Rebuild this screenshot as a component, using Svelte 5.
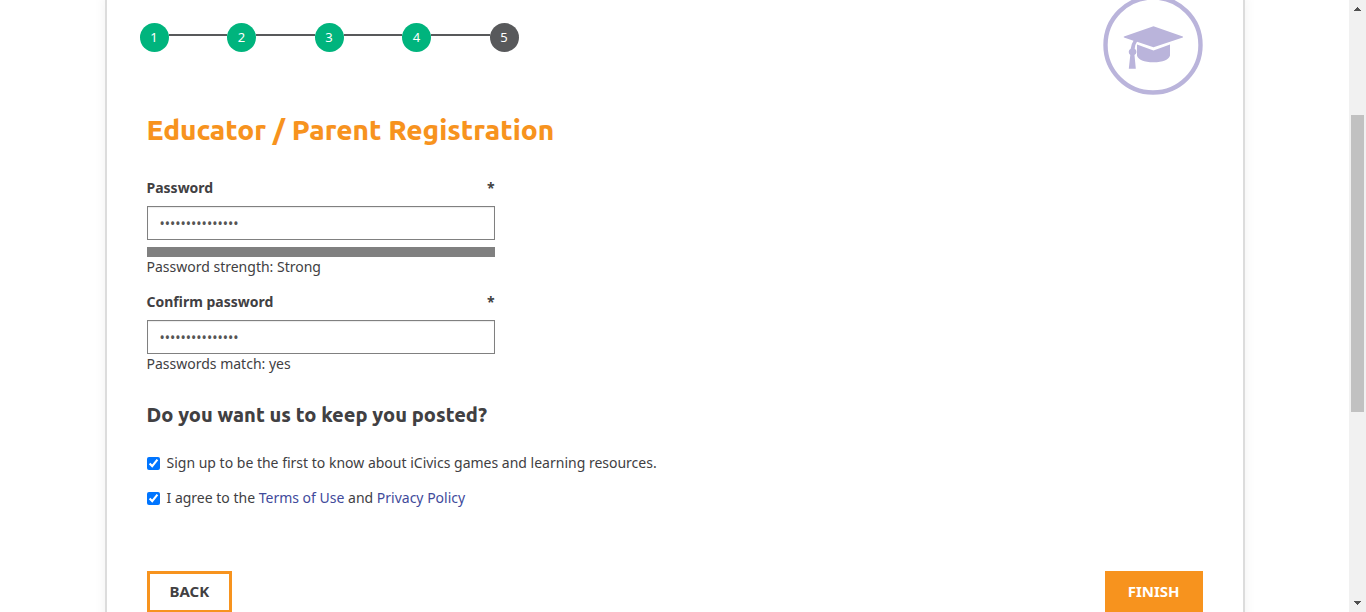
<script>
  const steps = [1, 2, 3, 4, 5];
  const current = 5;
  let password = $state('civics-teacher1');
  let confirmation = $state('civics-teacher1');
  let newsletter = $state(true);
  let agreed = $state(true);
  const match = $derived(password === confirmation ? 'yes' : 'no');
</script>

<div class="window">
  <div class="viewport">
    <main class="panel">
      <header class="top">
        <ol class="steps">
          {#each steps as step}
            <li class:link={step > 1}>
              <span class="dot" class:current={step === current}>{step}</span>
            </li>
          {/each}
        </ol>
        <svg class="badge" viewBox="0 0 100 100" aria-hidden="true">
          <circle cx="50" cy="50" r="47.5" fill="none" stroke="#bab4db" stroke-width="4.4" />
          <g fill="#bab4db">
            <path d="M21 41.400 50.500 31.200 79.800 41.400Q80.500 42 79.800 42.600L50.500 52.300 34 46.800Q32 49.500 31.700 53.700A3.600 3.600 0 0 1 31.500 60L32.800 73.800H25.800L27.300 60A3.600 3.600 0 0 1 27.700 53.800Q28.100 49 30.500 45.700L21 42.600Q20.300 42 21 41.400Z" />
            <path d="M34 49.600 50.500 55.400 67 49.600V60.500C66 64.500 60 67.300 50.500 67.300S35 64.500 34 60.500Z" />
          </g>
        </svg>
      </header>

      <h1>Educator / Parent Registration</h1>

      <form onsubmit={(e) => e.preventDefault()}>
        <div class="field">
          <label for="password"><span>Password</span><span>*</span></label>
          <input id="password" type="password" required bind:value={password} />
          <div class="strength"></div>
          <p>Password strength: Strong</p>
        </div>
        <div class="field">
          <label for="confirm"><span>Confirm password</span><span>*</span></label>
          <input id="confirm" type="password" required bind:value={confirmation} />
          <p>Passwords match: {match}</p>
        </div>

        <h2>Do you want us to keep you posted?</h2>

        <div class="check">
          <input id="news" type="checkbox" bind:checked={newsletter} />
          <label for="news">Sign up to be the first to know about iCivics games and learning resources.</label>
        </div>
        <div class="check">
          <input id="terms" type="checkbox" bind:checked={agreed} />
          <label for="terms">I agree to the <a href="#terms">Terms of Use</a> and <a href="#privacy">Privacy Policy</a></label>
        </div>

        <div class="actions">
          <button type="button" class="back">BACK</button>
          <button type="submit" class="finish">FINISH</button>
        </div>
      </form>
    </main>
  </div>
  <div class="scrollbar" aria-hidden="true">
    <svg viewBox="0 0 17 17"><path d="M8 7h1v1h1v1h1v1h1v1H5v-1h1V9h1V8h1z" fill="#505050" /></svg>
    <div class="track"><div class="thumb"></div></div>
    <svg viewBox="0 0 17 17"><path d="M5 6h7v1h-1v1h-1v1H9v1H8V9H7V8H6V7H5z" fill="#505050" /></svg>
  </div>
</div>

<style>
  :global(body) {
    margin: 0;
    background: #fff;
  }
  .window {
    display: grid;
    grid-template-columns: 1fr 17px;
    height: 100vh;
    font: 14px/20px "Noto Sans", sans-serif;
    color: #414042;
  }
  .viewport {
    overflow: hidden;
  }
  .panel {
    box-sizing: border-box;
    max-width: 1140px;
    min-height: 100%;
    margin: -5px auto 0;
    padding: 0 40px 40px;
    border: solid #dcdcdc;
    border-width: 0 2px;
    background: #fff;
    box-shadow: 0 0 12px rgba(0, 0, 0, 0.06);
  }
  .top {
    display: flex;
    justify-content: space-between;
    align-items: flex-start;
  }
  .steps {
    display: flex;
    width: 379px;
    margin: 28px 0 0 -7px;
    padding: 0;
    list-style: none;
  }
  .steps li {
    display: flex;
  }
  .steps .link {
    flex: 1;
  }
  .link::before {
    content: "";
    flex: 1;
    height: 2px;
    margin-top: 11px;
    background: #58595b;
  }
  .dot {
    width: 29px;
    height: 29px;
    border-radius: 50%;
    background: #00b47d;
    color: #fff;
    font-size: 13px;
    line-height: 29px;
    text-align: center;
  }
  .dot.current {
    background: #58595b;
  }
  .badge {
    width: 100px;
    height: 100px;
  }
  h1,
  h2 {
    margin: 0;
    font-family: Ubuntu, "Noto Sans", sans-serif;
    font-weight: 800;
  }
  h1 {
    margin: 18px 0 31px;
    font-size: 28px;
    line-height: 34px;
    color: #f7931e;
  }
  h2 {
    margin: 29px 0 26px;
    font-size: 20px;
    line-height: 24px;
  }
  .field {
    max-width: 348px;
    margin-bottom: 15px;
  }
  .field label {
    display: flex;
    justify-content: space-between;
    margin-bottom: 8px;
    font-weight: 700;
  }
  .field input {
    display: block;
    box-sizing: border-box;
    width: 100%;
    height: 34px;
    padding: 6px 12px;
    border: 1px solid #808080;
    box-shadow: inset 0 1px 1px rgba(0, 0, 0, 0.08);
    background: #fff;
    font: 14px/20px "Noto Sans", sans-serif;
    color: #555;
  }
  .strength {
    height: 10px;
    margin-top: 7px;
    background: #808080;
  }
  .field p {
    margin: 0;
  }
  .check {
    display: flex;
    align-items: center;
    gap: 7px;
    margin-bottom: 15px;
  }
  .check input {
    width: 13px;
    height: 13px;
    margin: 0;
    accent-color: #0075ff;
  }
  a {
    color: #414a9b;
    text-decoration: none;
  }
  .actions {
    display: flex;
    justify-content: space-between;
    margin-top: 63px;
  }
  button {
    height: 42px;
    padding: 0 20px 2px;
    border: 3px solid #f7931e;
    font: 700 15px/20px "Noto Sans", sans-serif;
    cursor: pointer;
  }
  .back {
    background: #fff;
    color: #414042;
  }
  .finish {
    background: #f7931e;
    color: #fff;
  }
  .scrollbar {
    display: flex;
    flex-direction: column;
    background: #f1f1f1;
  }
  .scrollbar svg {
    display: block;
    width: 17px;
    height: 17px;
  }
  .track {
    flex: 1;
    display: grid;
    grid-template-rows: 98fr 297fr 183fr;
    padding: 0 2px;
  }
  .thumb {
    grid-row: 2;
    background: #c1c1c1;
  }
</style>
